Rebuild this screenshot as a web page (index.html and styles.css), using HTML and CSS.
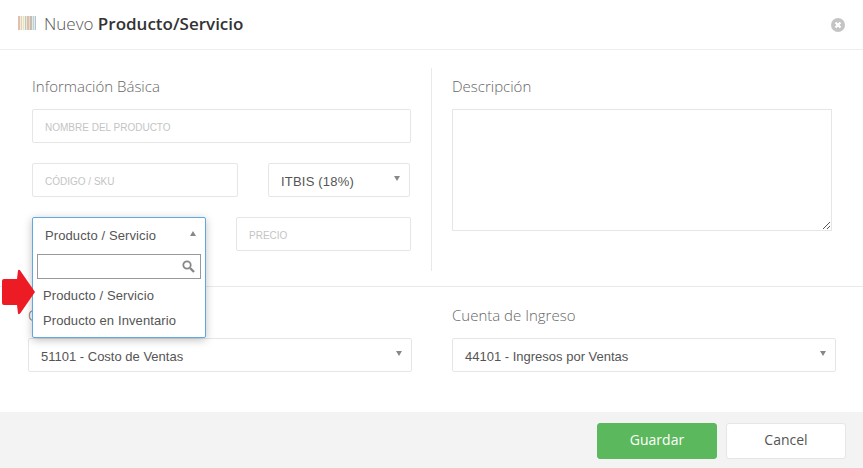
FILE: index.html
```html
<!DOCTYPE html>
<html lang="es">
<head>
<meta charset="utf-8">
<title>Nuevo Producto/Servicio</title>
<link rel="stylesheet" href="styles.css">
</head>
<body>
<div class="modal">
  <header class="head">
    <svg class="barcode" width="18" height="14" viewBox="0 0 18 14">
      <rect x="0" width="2" height="14" fill="#e3bfae"/>
      <rect x="2" width="1" height="14" fill="#f3ebe2"/>
      <rect x="3" width="1" height="14" fill="#d9d3c0"/>
      <rect x="4" width="1" height="14" fill="#f8f4e4"/>
      <rect x="5" width="1" height="14" fill="#efe3a8"/>
      <rect x="6" width="1" height="14" fill="#f6f3e6"/>
      <rect x="7" width="1" height="14" fill="#b4ccc4"/>
      <rect x="8" width="1" height="14" fill="#e8e8d8"/>
      <rect x="9" width="2" height="14" fill="#dcbdaf"/>
      <rect x="11" width="1" height="14" fill="#e5d9c8"/>
      <rect x="12" width="2" height="14" fill="#c6bcb2"/>
      <rect x="14" width="1" height="14" fill="#ece7dc"/>
      <rect x="15" width="1" height="14" fill="#bcd2da"/>
      <rect x="16" width="1" height="14" fill="#e3eaea"/>
      <rect x="17" width="1" height="14" fill="#a8c8d6"/>
    </svg>
    <h1 class="title">Nuevo <b>Producto/Servicio</b></h1>
    <svg class="close" width="14" height="14" viewBox="0 0 14 14">
      <circle cx="7" cy="7" r="7" fill="#c4c4c4"/>
      <path d="M4.500 4.500l5 5M9.500 4.500l-5 5" stroke="#fff" stroke-width="2.200"/>
    </svg>
  </header>

  <section class="top">
    <div class="basic">
      <h2 class="sec-title first">Información Básica</h2>
      <div class="field ph">NOMBRE DEL PRODUCTO</div>
      <div class="row row-a">
        <div class="field ph code">CÓDIGO / SKU</div>
        <div class="field sel itbis">ITBIS (18%)<i class="arrow"></i></div>
      </div>
      <div class="row row-b">
        <div class="type-slot"></div>
        <div class="field ph price">PRECIO</div>
      </div>
      <div class="dropdown">
        <div class="dd-current">Producto / Servicio<i class="arrow up"></i></div>
        <div class="dd-search">
          <svg width="13" height="13" viewBox="0 0 13 13">
            <circle cx="5" cy="5" r="3.700" fill="none" stroke="#888" stroke-width="1.800"/>
            <path d="M8 8l4 4" stroke="#888" stroke-width="2.400"/>
          </svg>
        </div>
        <div class="dd-item">Producto / Servicio</div>
        <div class="dd-item">Producto en Inventario</div>
      </div>
      <svg class="pointer" width="34" height="46" viewBox="0 0 34 46">
        <path d="M16 1.500 Q17 0 18.500 2 L33 23 L18.500 44 Q17 46 16 44.500 L15 36 L2 36 Q0 36 0 34 L0 12 Q0 10 2 10 L15 10 Z" fill="#ed1c24"/>
      </svg>
    </div>
    <div class="desc">
      <h2 class="sec-title first">Descripción</h2>
      <div class="textarea">
        <svg class="grip" width="8" height="8" viewBox="0 0 8 8">
          <path d="M1 8L8 1M5 8L8 5" stroke="#555" stroke-width="1"/>
        </svg>
      </div>
    </div>
  </section>

  <section class="accounts">
    <div class="acct">
      <h2 class="sec-title">Cuenta de Costo</h2>
      <div class="field sel">51101 - Costo de Ventas<i class="arrow"></i></div>
    </div>
    <div class="acct">
      <h2 class="sec-title">Cuenta de Ingreso</h2>
      <div class="field sel">44101 - Ingresos por Ventas<i class="arrow"></i></div>
    </div>
  </section>

  <footer class="foot">
    <button class="btn save">Guardar</button>
    <button class="btn cancel">Cancel</button>
  </footer>
</div>
</body>
</html>
```

FILE: styles.css
```css
* { box-sizing: border-box; }
html, body { margin: 0; padding: 0; background: #fff; }
body { width: 863px; height: 468px; overflow: hidden; font-family: "Open Sans", sans-serif; color: #555; }
.modal { display: flex; flex-direction: column; height: 468px; }

.head { height: 50px; flex: none; display: flex; align-items: center; padding: 0 18px; border-bottom: 1px solid #eee; gap: 8px; }
.barcode { margin-top: -3px; }
.title { margin: 0; font-size: 17px; font-weight: 300; color: #555; flex: 1; line-height: 20px; margin-top: -1px; }
.title b { font-weight: 600; color: #333; }
.close { margin-top: 1px; }

.top { height: 237px; flex: none; display: flex; padding: 18px 31px 15px 32px; border-bottom: 1px solid #e9e9e9; }
.basic { position: relative; width: 400px; padding-right: 20px; border-right: 1px solid #e9e9e9; height: 203px; }
.desc { margin-left: 20px; width: 380px; }

.sec-title { margin: 0 0 12px; font-size: 15px; font-weight: 300; line-height: 19px; color: #666; height: 19px; }
.sec-title.first { margin-top: 9px; margin-bottom: 13px; }

.field { height: 34px; border: 1px solid #e6e6e6; border-radius: 2px; display: flex; align-items: center; padding: 2px 0 0 12px; font-family: "Liberation Sans", Arial, sans-serif; font-size: 13px; color: #555; position: relative; background: #fff; }
.ph { font-size: 10px; color: #c4c4c4; }
.row { display: flex; margin-top: 20px; }
.row-a { justify-content: space-between; width: 378px; }
.code { width: 206px; }
.itbis { width: 142px; letter-spacing: 0.2px; }
.type-slot { width: 204px; height: 34px; flex: none; }
.price { width: 175px; }

.arrow { position: absolute; right: 9px; top: 12px; width: 0; height: 0; border-left: 3.500px solid transparent; border-right: 3.500px solid transparent; border-top: 5px solid #888; }
.arrow.up { border-top: 0; border-bottom: 5px solid #888; right: 9px; top: 13px; }

.dropdown { position: absolute; left: 0; top: 149px; width: 174px; height: 121px; background: #fff; border: 1px solid #5fa8e0; border-radius: 2px; box-shadow: 0 2px 8px rgba(0,0,0,0.25); z-index: 5; font-family: "Liberation Sans", Arial, sans-serif; font-size: 13px; letter-spacing: 0.1px; color: #555; }
.dd-current { height: 36px; line-height: 35px; padding-left: 12px; position: relative; }
.dd-search { margin: 0 4px; height: 25px; border: 1px solid #999; display: flex; align-items: center; justify-content: flex-end; padding-right: 5px; background: #fff; }
.dd-item { height: 25px; line-height: 25px; padding-left: 10px; }
.dd-search + .dd-item { margin-top: 4px; }

.pointer { position: absolute; left: -30px; top: 201px; z-index: 6; }

.textarea { height: 122px; width: 380px; border: 1px solid #e6e6e6; position: relative; }
.grip { position: absolute; right: 1px; bottom: 1px; }

.accounts { flex: none; height: 125px; display: flex; padding: 19px 27px 0 28px; gap: 40px; }
.acct { width: 384px; }
.acct .sec-title { margin-bottom: 13px; }

.foot { flex: 1; background: #f3f3f3; display: flex; justify-content: flex-end; align-items: flex-start; gap: 9px; padding: 11px 17px 0 0; }
.btn { width: 120px; height: 36px; border-radius: 3px; font-family: "Open Sans", sans-serif; font-size: 14px; padding: 0 0 4px; }
.save { background: #5cb85c; border: 1px solid #5cb85c; color: #fff; font-weight: 400; }
.cancel { background: #fff; border: 1px solid #e6e6e6; color: #555; }
```
